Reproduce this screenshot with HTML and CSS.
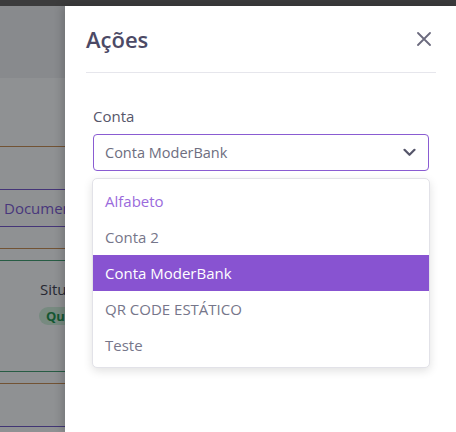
FILE: index.html
```html
<!DOCTYPE html>
<html lang="pt">
<head>
<meta charset="utf-8">
<link rel="stylesheet" href="styles.css">
</head>
<body>
<div class="topbar"></div>
<div class="screen">
  <aside class="backdrop">
    <div class="page">
      <div class="page-head"></div>
      <div class="rule orange r1"></div>
      <div class="doc-btn">Documentos</div>
      <div class="rule orange r2"></div>
      <div class="rule green r3"></div>
      <div class="status">
        <span class="status-label">Situação</span>
        <span class="pill">Quitado</span>
      </div>
      <div class="rule green r4"></div>
      <div class="rule orange r5"></div>
      <div class="rule purple r6"></div>
    </div>
    <div class="overlay"></div>
  </aside>
  <section class="drawer">
    <header class="drawer-head">
      <h2 class="drawer-title">Ações</h2>
      <button class="close" aria-label="Fechar">
        <svg width="14" height="14" viewBox="0 0 14 14"><path d="M1 1L13 13M13 1L1 13" stroke="#6b6a7e" stroke-width="1.8" stroke-linecap="round" fill="none"/></svg>
      </button>
    </header>
    <div class="drawer-body">
      <div class="field-label">Conta</div>
      <div class="select">
        <span class="select-value">Conta ModerBank</span>
        <svg class="chevron" width="13" height="9" viewBox="0 0 13 9"><path d="M1.5 1.8L6.5 6.8L11.5 1.8" stroke="#55556a" stroke-width="2.2" stroke-linecap="round" stroke-linejoin="round" fill="none"/></svg>
      </div>
      <ul class="menu">
        <li class="item item-first">Alfabeto</li>
        <li class="item">Conta 2</li>
        <li class="item item-active">Conta ModerBank</li>
        <li class="item">QR CODE ESTÁTICO</li>
        <li class="item">Teste</li>
      </ul>
    </div>
  </section>
</div>
</body>
</html>
```
FILE: styles.css
```css
* { box-sizing: border-box; }
html, body {
  margin: 0;
  padding: 0;
}
body {
  width: 456px;
  height: 432px;
  overflow: hidden;
  font-family: "Open Sans", "Noto Sans", sans-serif;
  background: #fff;
}
.topbar {
  height: 6px;
  background: #3b3b3c;
}
.screen {
  display: flex;
  height: 426px;
}
.backdrop {
  position: relative;
  width: 65px;
  flex: none;
  overflow: hidden;
}
.page {
  display: flex;
  flex-direction: column;
  height: 100%;
  background: #fff;
}
.page-head {
  height: 72px;
  background: #f1f2f4;
  flex: none;
}
.rule { height: 1px; flex: none; }
.orange { background: #c98a4c; }
.green { background: #3b9c6a; }
.purple { background: #6d52c4; }
.r1 { margin-top: 68px; }
.doc-btn {
  margin-top: 42px;
  margin-left: -20px;
  width: 160px;
  height: 38px;
  border: 1px solid #7452cc;
  padding-left: 23px;
  font-size: 15px;
  line-height: 36px;
  color: #7a56d4;
  white-space: nowrap;
  flex: none;
}
.r2 { margin-top: 21px; }
.r3 { margin-top: 11px; }
.status {
  margin-top: 18px;
  padding-left: 40px;
  display: flex;
  flex-direction: column;
  align-items: flex-start;
  flex: none;
}
.status-label {
  font-size: 15px;
  line-height: 20px;
  color: #3a3a4a;
  white-space: nowrap;
}
.pill {
  margin-top: 8px;
  margin-left: -1px;
  height: 18px;
  padding: 0 7px;
  border-radius: 9px;
  background: #d2f1dc;
  color: #179148;
  font-size: 13px;
  font-weight: 700;
  line-height: 18px;
  white-space: nowrap;
}
.r4 { margin-top: 46px; }
.r5 { margin-top: 11px; }
.r6 { margin-top: 42px; }
.overlay {
  position: absolute;
  inset: 0;
  background: rgba(18, 22, 26, 0.47);
}
.drawer {
  flex: 1;
  background: #fff;
  padding: 0 20px 0 21px;
  box-shadow: -3px 0 8px rgba(0, 0, 0, 0.18);
  position: relative;
}
.drawer-head {
  height: 67px;
  display: flex;
  align-items: center;
  justify-content: space-between;
  border-bottom: 1px solid #e6e6ec;
}
.drawer-title {
  margin: 0;
  font-size: 22px;
  font-weight: 600;
  color: #4c4a66;
  line-height: 28px;
}
.close {
  border: 0;
  background: none;
  padding: 0;
  margin-right: 5px;
  width: 14px;
  height: 14px;
  display: flex;
}
.drawer-body {
  padding: 33px 7px 0;
}
.field-label {
  font-size: 15px;
  line-height: 20px;
  color: #56566a;
}
.select {
  margin-top: 8px;
  height: 37px;
  border: 1px solid #8a5cd2;
  border-radius: 4px;
  display: flex;
  align-items: center;
  justify-content: space-between;
  padding: 0 12px 0 11px;
}
.select-value {
  font-size: 14.5px;
  color: #6e6e80;
}
.chevron { display: block; }
.menu {
  list-style: none;
  margin: 7px -1px 0;
  padding: 4px 0;
  border: 1px solid #e2e2e8;
  border-radius: 5px;
  box-shadow: 0 3px 10px rgba(0, 0, 0, 0.12);
  background: #fff;
}
.item {
  height: 36px;
  padding-left: 12px;
  font-size: 15px;
  line-height: 36px;
  color: #76768a;
}
.item-first { color: #9b6bdc; }
.item-active {
  background: #8853d1;
  color: #fff;
}
```
